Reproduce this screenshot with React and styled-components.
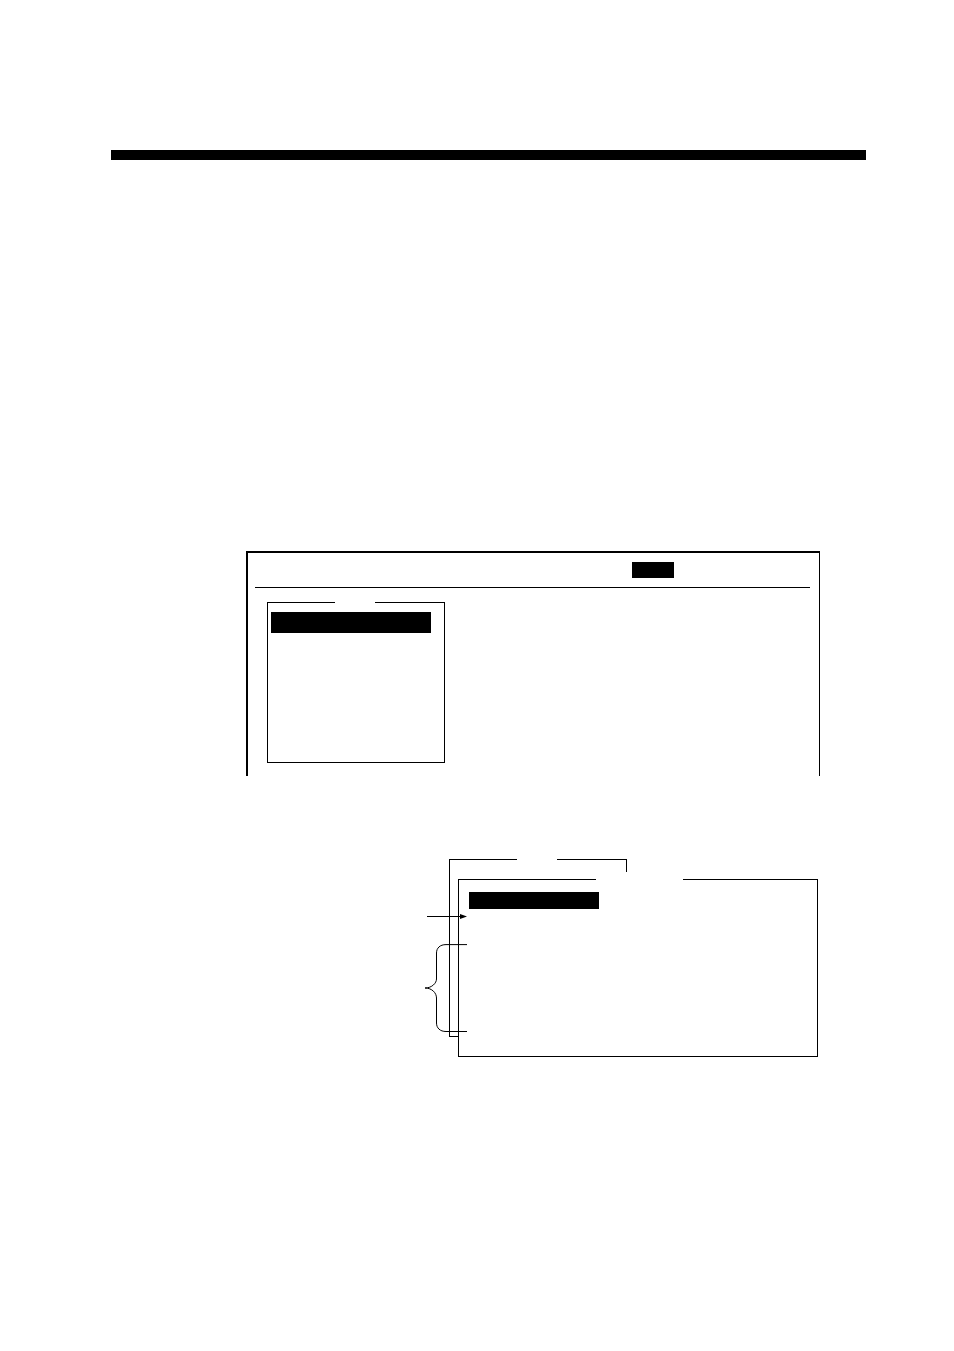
import styled, { createGlobalStyle } from 'styled-components';

const GlobalStyle = createGlobalStyle`
  * {
    box-sizing: border-box;
  }

  body {
    margin: 0;
    background-color: #fff;
    color: #000;
    font-family: "Liberation Sans", sans-serif;
  }
`

const Page = styled.main`
  min-height: 100vh;
  padding: 150px 88px 0 111px;
`

const PageRule = styled.hr`
  height: 10px;
  margin: 0 0 391px;
  border: none;
  background-color: #000;
`

const Screen = styled.section`
  height: 225px;
  margin: 0 46px 83px 135px;
  padding: 0 9px 0 7px;
  border: solid #000;
  border-width: 2px 1px 0 2px;
`

const ScreenHeader = styled.header`
  display: flex;
  justify-content: flex-end;
  align-items: flex-end;
  height: 35px;
  margin-bottom: 14px;
  padding: 0 136px 9px 0;
  border-bottom: 1px solid #000;
`

const Highlight = styled.div`
  width: ${(props) => props.$width}px;
  height: ${(props) => props.$height}px;
  background-color: #000;
`

const Window = styled.div`
  position: relative;
  height: ${(props) => props.$height}px;
  border: solid #000;
  border-width: 0 1px 1px;
  background-color: #fff;
`

const Menu = styled(Window)`
  width: 178px;
  margin-left: 12px;
  padding-left: 3px;
`

// top edge of a window, broken where the title goes
const TitleEdge = styled.div`
  display: grid;
  grid-template-columns: ${(props) => props.$columns};
  height: ${(props) => props.$height}px;
  margin-left: -${(props) => props.$inset}px;
`

const Edge = styled.span`
  height: 1px;
  background-color: #000;
`

const Stack = styled.section`
  display: grid;
  grid-template-columns: 24px 9px 1fr;
  grid-template-rows: 20px auto 20px;
  margin: 0 48px 0 314px;
`

const BackWindow = styled(Window)`
  grid-column: 2 / 4;
  grid-row: 1 / 3;
  width: 178px;
  border-right: none;
`

const BackTitleEdge = styled(TitleEdge)`
  border-right: 1px solid #000;
`

const FrontWindow = styled(Window)`
  grid-column: 3;
  grid-row: 2 / 4;
  padding-left: 10px;
`

const Callouts = styled.svg`
  position: relative;
  grid-column: 1 / 4;
  grid-row: 1 / 4;
  margin-top: 53px;
`

const WindowTitle = ({ columns, height, inset = 0, as: Row = TitleEdge }) => (
  <Row $columns={columns} $height={height} $inset={inset}>
    <Edge />
    <span />
    <Edge />
  </Row>
);

const App = () => {
  return (
    <>
      <GlobalStyle />
      <Page>
        <PageRule />
        <Screen>
          <ScreenHeader>
            <Highlight $width={42} $height={16} />
          </ScreenHeader>
          <Menu $height={161}>
            <WindowTitle columns="67px 40px 1fr" height={10} inset={3} />
            <Highlight $width={160} $height={21} />
          </Menu>
        </Screen>
        <Stack>
          <BackWindow $height={178}>
            <WindowTitle as={BackTitleEdge} columns="67px 40px 1fr" height={13} />
          </BackWindow>
          <FrontWindow $height={178}>
            <WindowTitle columns="137px 87px 1fr" height={13} inset={10} />
            <Highlight $width={130} $height={17} />
          </FrontWindow>
          <Callouts width="42" height="124" viewBox="0 0 42 124" fill="none" stroke="#000" aria-hidden="true">
            <path d="M2 4.5H36" />
            <path d="M35 2L42 4.5L35 7Z" fill="#000" stroke="none" />
            <path d="M42 32.6H21C15 32.6 11.5 36 11.5 41V67C11.5 71 7 76 0 76C7 76 11.5 81 11.5 86V111C11.5 116 15 119.5 21 119.5H42" />
          </Callouts>
        </Stack>
      </Page>
    </>
  );
};

export default App;
